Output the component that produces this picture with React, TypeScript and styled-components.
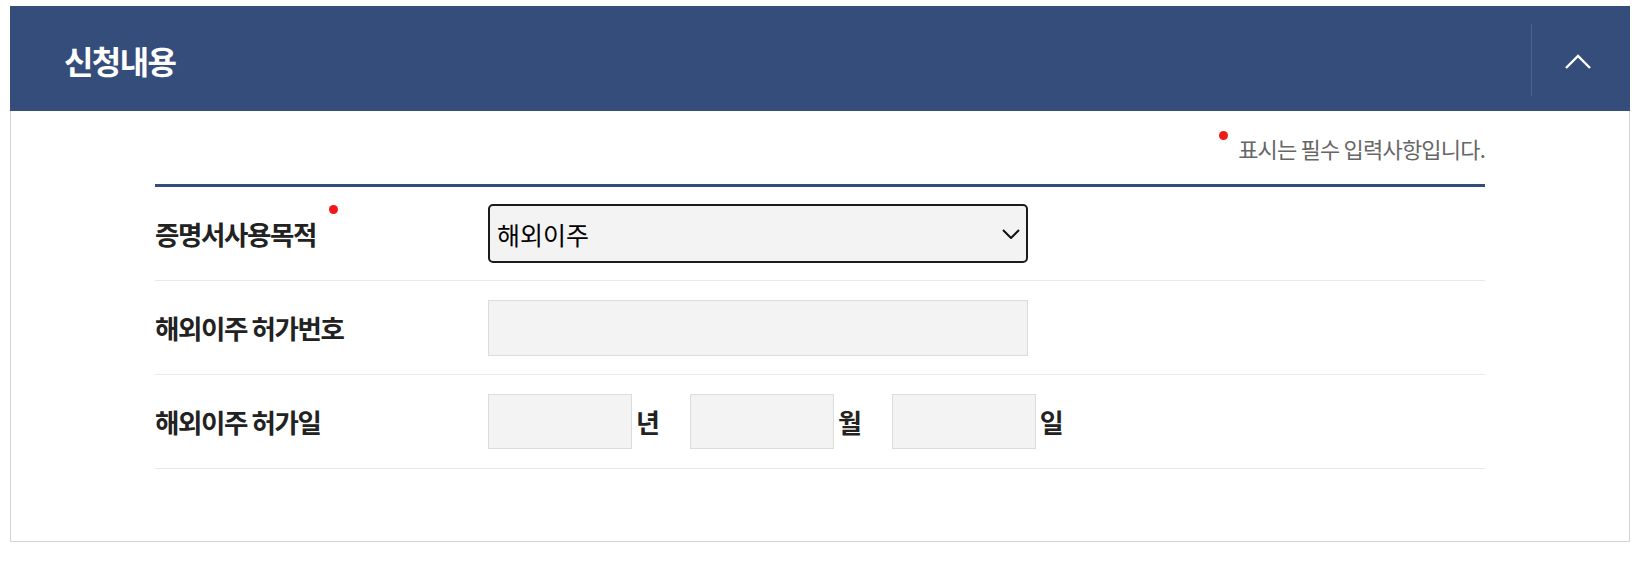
import styled, { createGlobalStyle } from "styled-components";

const GlobalStyle = createGlobalStyle`
  body {
    margin: 0;
    background: #fff;
    font-family: "Noto Sans CJK KR", "Noto Sans", sans-serif;
  }
`;

const Page = styled.div`
  padding: 6px 4px 20px 10px;
`;

const Panel = styled.section`
  width: 100%;
`;

const PanelHeader = styled.header`
  display: flex;
  align-items: center;
  height: 105px;
  padding-left: 54px;
  background: #354d7a;
`;

const PanelTitle = styled.h2`
  margin: 0;
  padding-top: 3px;
  color: #fff;
  font-size: 32px;
  font-weight: 700;
  letter-spacing: -1.6px;
`;

const ToggleButton = styled.button`
  display: flex;
  align-items: center;
  justify-content: center;
  margin: 3px 0 0 auto;
  width: 99px;
  height: 72px;
  padding: 2px 7px 0 0;
  border: 0;
  border-left: 1px solid rgba(255, 255, 255, 0.12);
  background: transparent;
  cursor: pointer;
`;

const PanelBody = styled.div`
  padding: 0 144px 72px;
  border: 1px solid #d5d5d5;
  border-top: 0;
`;

const Notice = styled.p`
  display: flex;
  justify-content: flex-end;
  align-items: center;
  height: 73px;
  margin: 0;
  padding-top: 1px;
  box-sizing: border-box;
  color: #666;
  font-size: 22px;
  letter-spacing: -0.8px;
`;

const Dot = styled.span<{ $top: number; $gap: number }>`
  align-self: flex-start;
  display: inline-block;
  width: 9px;
  height: 9px;
  margin-top: ${(p) => p.$top}px;
  margin-left: ${(p) => p.$gap}px;
  margin-right: 10px;
  border-radius: 50%;
  background: #f21818;
`;

const Table = styled.div`
  border-top: 3px solid #354d7a;
`;

const Row = styled.div`
  display: grid;
  grid-template-columns: 333px 1fr;
  height: 93px;
  border-bottom: 1px solid #e9e9e9;
`;

const Label = styled.div`
  display: flex;
  align-items: center;
  color: #222;
  font-size: 26.5px;
  font-weight: 700;
  letter-spacing: -1.4px;
`;

const Field = styled.div`
  display: flex;
  align-items: center;
`;

const SelectWrap = styled.div`
  position: relative;
  width: 540px;
`;

const Select = styled.select`
  appearance: none;
  width: 100%;
  height: 59px;
  padding: 0 40px 0 7px;
  border: 2px solid #1b1b1b;
  border-radius: 5px;
  background: #f3f3f3;
  color: #000;
  font-family: inherit;
  font-size: 25px;
  outline: none;
`;

const SelectArrow = styled.svg`
  position: absolute;
  right: 8px;
  top: 25px;
  pointer-events: none;
`;

const TextInput = styled.input<{ $width: number; $height: number }>`
  width: ${(p) => p.$width}px;
  height: ${(p) => p.$height}px;
  box-sizing: border-box;
  padding: 0 10px;
  border: 1px solid #dcdcdc;
  background: #f3f3f3;
  font-family: inherit;
  font-size: 20px;
  outline: none;
`;

const Unit = styled.span`
  margin: 0 30px 0 4px;
  color: #222;
  font-size: 26px;
  font-weight: 700;
`;

export default function App() {
  return (
    <Page>
      <GlobalStyle />
      <Panel>
        <PanelHeader>
          <PanelTitle>신청내용</PanelTitle>
          <ToggleButton aria-label="접기">
            <svg width="28" height="17" viewBox="0 0 28 17">
              <polyline points="2,15 14,3 26,15" fill="none" stroke="#fff" strokeWidth="2.4" />
            </svg>
          </ToggleButton>
        </PanelHeader>
        <PanelBody>
          <Notice>
            <Dot $top={19} $gap={0} />
            표시는 필수 입력사항입니다.
          </Notice>
          <Table>
            <Row>
              <Label>
                증명서사용목적
                <Dot $top={18} $gap={13} />
              </Label>
              <Field>
                <SelectWrap>
                  <Select defaultValue="해외이주">
                    <option>해외이주</option>
                  </Select>
                  <SelectArrow width="18" height="10" viewBox="0 0 18 10">
                    <polyline points="1,1 9,9 17,1" fill="none" stroke="#111" strokeWidth="2" />
                  </SelectArrow>
                </SelectWrap>
              </Field>
            </Row>
            <Row>
              <Label>해외이주 허가번호</Label>
              <Field>
                <TextInput $width={540} $height={56} />
              </Field>
            </Row>
            <Row>
              <Label>해외이주 허가일</Label>
              <Field>
                <TextInput $width={144} $height={55} />
                <Unit>년</Unit>
                <TextInput $width={144} $height={55} />
                <Unit>월</Unit>
                <TextInput $width={144} $height={55} />
                <Unit>일</Unit>
              </Field>
            </Row>
          </Table>
        </PanelBody>
      </Panel>
    </Page>
  );
}
